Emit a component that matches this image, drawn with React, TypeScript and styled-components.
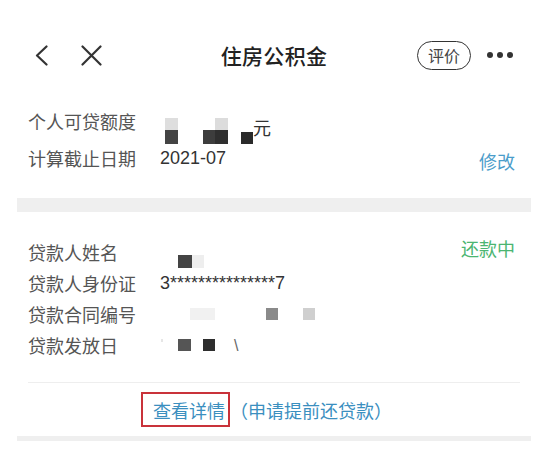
import React from 'react';
import styled, { createGlobalStyle } from 'styled-components';

const GlobalStyle = createGlobalStyle`
  html, body {
    margin: 0;
    padding: 0;
    background: #fff;
  }
  body {
    font-family: "Noto Sans CJK SC", "Liberation Sans", sans-serif;
    color: #333;
  }
`;

const Page = styled.div`
  width: 549px;
  height: 470px;
  box-sizing: border-box;
  padding: 30px 18px 0 17px;
  overflow: hidden;
`;

const NavBar = styled.div`
  height: 50px;
  display: grid;
  grid-template-columns: 1fr auto 1fr;
  align-items: center;
  padding: 0 18px;
`;

const NavLeft = styled.div`
  display: flex;
  align-items: center;
  gap: 33px;
`;

const NavRight = styled.div`
  display: flex;
  align-items: center;
  justify-content: flex-end;
  gap: 16px;
`;

const Title = styled.div`
  font-size: 21px;
  font-weight: 500;
  color: #222;
  letter-spacing: 0.3px;
`;

const Pill = styled.div`
  width: 54px;
  height: 29px;
  box-sizing: border-box;
  border: 1.5px solid #333;
  border-radius: 15px;
  display: flex;
  align-items: center;
  justify-content: center;
  font-size: 16px;
  color: #444;
`;

const Dots = styled.div`
  display: flex;
  gap: 4px;
`;

const Dot = styled.span`
  width: 6px;
  height: 6px;
  border-radius: 50%;
  background: #333;
`;

const Section = styled.div<{ $top: number; $bottom: number }>`
  padding: ${(p) => p.$top}px 16px ${(p) => p.$bottom}px 11px;
  display: flex;
  justify-content: space-between;
  align-items: flex-start;
`;

const Rows = styled.div`
  display: flex;
  flex-direction: column;
`;

const Row = styled.div<{ $h: number }>`
  display: flex;
  align-items: flex-start;
  height: ${(p) => p.$h}px;
`;

const Label = styled.div<{ $h: number }>`
  width: 132px;
  font-size: 18px;
  line-height: ${(p) => p.$h}px;
  color: #555;
`;

const Value = styled.div<{ $top?: number }>`
  display: flex;
  align-items: flex-start;
  margin-top: ${(p) => p.$top ?? 0}px;
  font-family: "Liberation Sans", "Noto Sans CJK SC", sans-serif;
  font-size: 18px;
  color: #333;
`;

const TextValue = styled.div<{ $h: number }>`
  font-family: "Liberation Sans", "Noto Sans CJK SC", sans-serif;
  font-size: 18px;
  line-height: ${(p) => p.$h}px;
  color: #333;
`;

const Yuan = styled.span`
  font-family: "Noto Sans CJK SC", sans-serif;
  font-size: 18px;
  line-height: 18px;
  color: #333;
`;

const Pixels = styled.div<{ $h: number }>`
  display: flex;
  flex-direction: column;
  justify-content: flex-end;
  height: ${(p) => p.$h}px;
`;

const Pixel = styled.span<{ $c: string; $w: number; $h: number; $ml?: number }>`
  display: block;
  width: ${(p) => p.$w}px;
  height: ${(p) => p.$h}px;
  margin-left: ${(p) => p.$ml ?? 0}px;
  background: ${(p) => p.$c};
`;

const Stroke = styled.span<{ $ml: number }>`
  margin-left: ${(p) => p.$ml}px;
  font-size: 16px;
  line-height: 14px;
  color: #666;
`;

const Action = styled.div<{ $color: string; $top?: number }>`
  font-size: 18px;
  line-height: 20px;
  margin-top: ${(p) => p.$top ?? 0}px;
  color: ${(p) => p.$color};
`;

const Band = styled.div<{ $h: number }>`
  height: ${(p) => p.$h}px;
  background: #efefef;
`;

const Divider = styled.div`
  height: 1px;
  margin: 21px 11px 0 11px;
  background: #eeeeee;
`;

const LinkRow = styled.div`
  height: 53px;
  display: flex;
  align-items: center;
  justify-content: center;
  padding-right: 15px;
  font-size: 18px;
  color: #3b8fbf;
`;

const Boxed = styled.span`
  height: 35px;
  box-sizing: border-box;
  display: flex;
  align-items: center;
  padding: 0 3px 0 10px;
  border: 2px solid #c9323a;
`;

const Back = () => (
  <svg width="13" height="21" viewBox="0 0 13 21">
    <polyline points="11.5,1.5 2,10.5 11.5,19.5" fill="none" stroke="#333" strokeWidth="2.2" strokeLinecap="round" strokeLinejoin="round" />
  </svg>
);

const Close = () => (
  <svg width="21" height="21" viewBox="0 0 21 21">
    <path d="M1.5 1.5 L19.5 19.5 M19.5 1.5 L1.5 19.5" fill="none" stroke="#333" strokeWidth="2.2" strokeLinecap="round" />
  </svg>
);

const App: React.FC = () => (
  <Page>
    <GlobalStyle />
    <NavBar>
      <NavLeft>
        <Back />
        <Close />
      </NavLeft>
      <Title>住房公积金</Title>
      <NavRight>
        <Pill>评价</Pill>
        <Dots>
          <Dot />
          <Dot />
          <Dot />
        </Dots>
      </NavRight>
    </NavBar>

    <Section $top={23} $bottom={21}>
      <Rows>
        <Row $h={37}>
          <Label $h={37}>个人可贷额度</Label>
          <Value $top={15}>
            <Pixels $h={26}>
              <Pixel $c="#dedede" $w={13} $h={12} $ml={5} />
              <Pixel $c="#444" $w={13} $h={14} $ml={5} />
            </Pixels>
            <Pixels $h={26}>
              <Pixel $c="#3d3d3d" $w={12} $h={14} $ml={25} />
            </Pixels>
            <Pixels $h={26}>
              <Pixel $c="#dcdcdc" $w={13} $h={12} />
              <Pixel $c="#2f2f2f" $w={13} $h={14} />
            </Pixels>
            <Pixels $h={26}>
              <Pixel $c="#2a2a2a" $w={12} $h={12} $ml={13} />
            </Pixels>
            <Yuan>元</Yuan>
          </Value>
        </Row>
        <Row $h={37}>
          <Label $h={37}>计算截止日期</Label>
          <TextValue $h={37}>2021-07</TextValue>
        </Row>
      </Rows>
      <Action $color="#4a9dca" $top={48}>修改</Action>
    </Section>

    <Band $h={14} />

    <Section $top={25} $bottom={0}>
      <Rows>
        <Row $h={31}>
          <Label $h={31}>贷款人姓名</Label>
          <Value $top={18}>
            <Pixel $c="#444" $w={14} $h={13} $ml={18} />
            <Pixel $c="#eeeeee" $w={12} $h={13} />
          </Value>
        </Row>
        <Row $h={31}>
          <Label $h={31}>贷款人身份证</Label>
          <TextValue $h={31}>3***************7</TextValue>
        </Row>
        <Row $h={31}>
          <Label $h={31}>贷款合同编号</Label>
          <Value $top={9}>
            <Pixel $c="#f1f1f1" $w={25} $h={12} $ml={30} />
            <Pixel $c="#8a8a8a" $w={12} $h={12} $ml={51} />
            <Pixel $c="#cfcfcf" $w={12} $h={12} $ml={25} />
          </Value>
        </Row>
        <Row $h={31}>
          <Label $h={31}>贷款发放日</Label>
          <Value $top={9}>
            <Pixel $c="#e6e6e6" $w={2} $h={3} $ml={1} />
            <Pixel $c="#555" $w={13} $h={12} $ml={15} />
            <Pixel $c="#2e2e2e" $w={12} $h={12} $ml={12} />
            <Stroke $ml={19}>\</Stroke>
          </Value>
        </Row>
      </Rows>
      <Action $color="#4bb571" $top={1}>还款中</Action>
    </Section>

    <Divider />
    <LinkRow>
      <Boxed>查看详情</Boxed>
      <span>（申请提前还贷款）</span>
    </LinkRow>
    <Band $h={5} />
  </Page>
);

export default App;
